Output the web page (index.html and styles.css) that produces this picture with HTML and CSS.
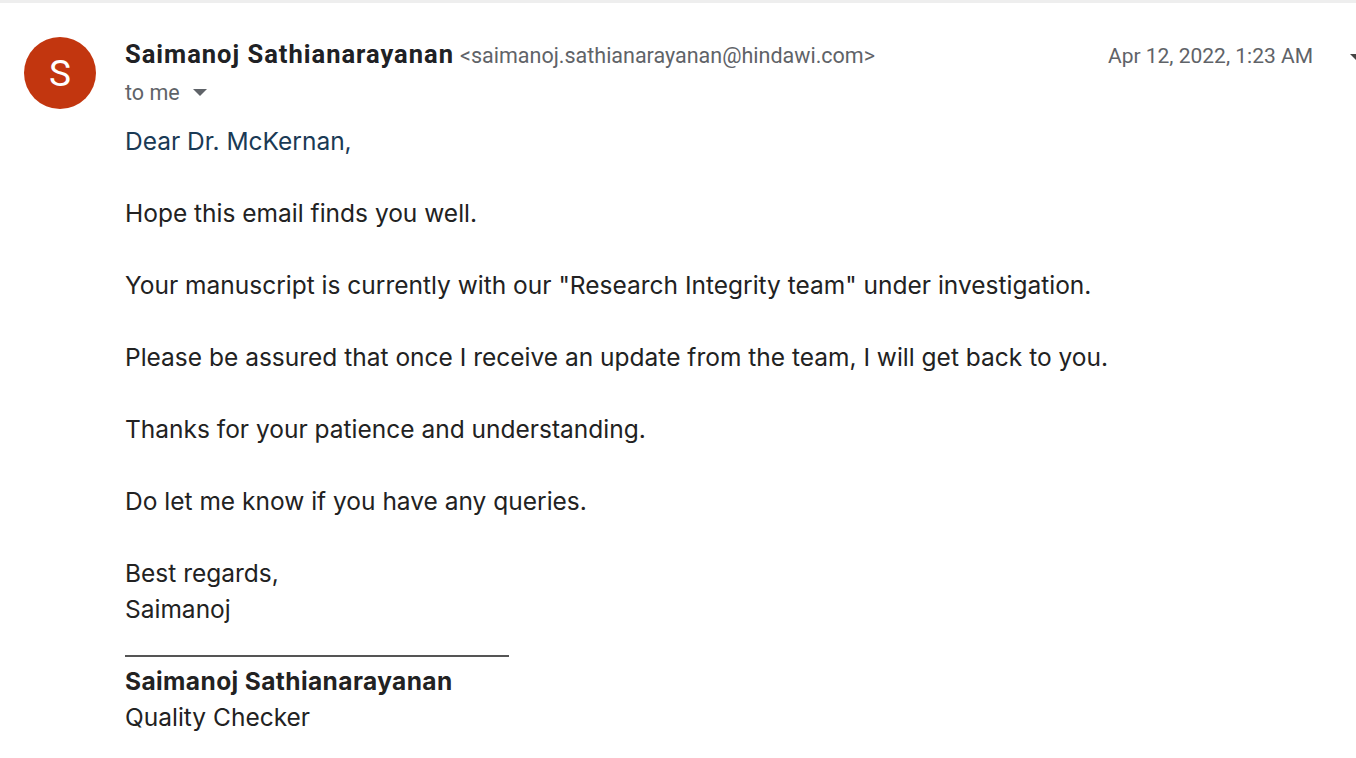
FILE: index.html
```html
<!DOCTYPE html>
<html>
<head>
<meta charset="utf-8">
<link rel="stylesheet" href="styles.css">
</head>
<body>
<div class="topbar"></div>
<div class="mail">
  <div class="header">
    <div class="avatar">S</div>
    <div class="meta">
      <div class="fromrow">
        <span class="name">Saimanoj Sathianarayanan</span>
        <span class="addr">&lt;saimanoj.sathianarayanan@hindawi.com&gt;</span>
        <span class="date">Apr 12, 2022, 1:23 AM</span>
        <span class="more"></span>
      </div>
      <div class="torow">to me <span class="caret"></span></div>
    </div>
  </div>
  <div class="body">
    <p class="greet">Dear Dr. McKernan,</p>
    <p>Hope this email finds you well.</p>
    <p>Your manuscript is currently with our "Research Integrity team" under investigation.</p>
    <p>Please be assured that once I receive an update from the team, I will get back to you.</p>
    <p>Thanks for your patience and understanding.</p>
    <p>Do let me know if you have any queries.</p>
    <p class="sign">Best regards,<br>Saimanoj</p>
    <div class="rule"></div>
    <div class="signame">Saimanoj Sathianarayanan</div>
    <div class="sigrole">Quality Checker</div>
  </div>
</div>
</body>
</html>
```
FILE: styles.css
```css
html, body {
  margin: 0;
  padding: 0;
  background: #fff;
  overflow: hidden;
}
body {
  width: 1356px;
  height: 758px;
  font-family: Roboto, "Liberation Sans", Arial, sans-serif;
}
.topbar {
  height: 3px;
  background: #eeeeee;
}
.mail {
  padding-left: 24px;
}
.header {
  display: flex;
  padding-top: 34px;
}
.avatar {
  width: 72px;
  height: 72px;
  border-radius: 50%;
  background: #c2360f;
  color: #fff;
  font-size: 37px;
  display: flex;
  align-items: center;
  justify-content: center;
  flex: none;
}
.meta {
  flex: 1;
  margin-left: 29px;
  margin-top: 2px;
}
.fromrow {
  display: flex;
  align-items: baseline;
  height: 35px;
}
.name {
  font-size: 25.5px;
  font-weight: 700;
  color: #202124;
  letter-spacing: 1px;
}
.addr {
  font-size: 21.5px;
  color: #5f6368;
  margin-left: 6px;
}
.date {
  margin-left: auto;
  font-size: 21px;
  color: #5f6368;
}
.more {
  width: 0;
  height: 0;
  border-left: 6px solid transparent;
  border-right: 6px solid transparent;
  border-top: 6px solid #444;
  margin-left: 37px;
  margin-right: -6px;
  align-self: center;
}
.torow {
  font-size: 21.5px;
  color: #5f6368;
  height: 36px;
  display: flex;
  align-items: center;
}
.caret {
  display: inline-block;
  width: 0;
  height: 0;
  border-left: 7px solid transparent;
  border-right: 7px solid transparent;
  border-top: 7px solid #5f6368;
  margin-left: 13px;
}
.body {
  padding-left: 101px;
  padding-top: 13px;
  font-family: Inter, "Liberation Sans", sans-serif;
  font-size: 24.5px;
  line-height: 36px;
  color: #222222;
}
.body p {
  margin: 0 0 36px 0;
}
.body .greet {
  color: #1a3a55;
}
.body .sign {
  margin-bottom: 28px;
}
.rule {
  width: 384px;
  height: 2px;
  background: #555;
  margin-bottom: 6px;
}
.signame {
  font-weight: 700;
  letter-spacing: 0.4px;
}
```
